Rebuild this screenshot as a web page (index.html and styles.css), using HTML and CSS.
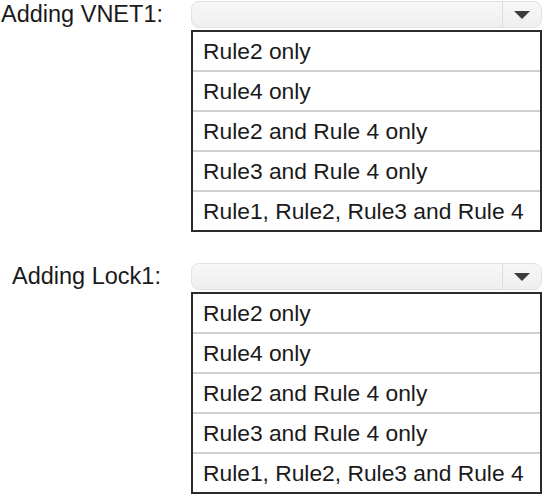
FILE: index.html
```html
<!DOCTYPE html>
<html>
<head>
<meta charset="utf-8">
<link rel="stylesheet" href="styles.css">
</head>
<body>
<div class="page">
  <section class="group first">
    <div class="label">Adding VNET1:</div>
    <div class="control">
      <div class="select">
        <div class="select-field"></div>
        <div class="select-btn"><span class="arrow"></span></div>
      </div>
      <ul class="options">
        <li>Rule2 only</li>
        <li>Rule4 only</li>
        <li>Rule2 and Rule 4 only</li>
        <li>Rule3 and Rule 4 only</li>
        <li>Rule1, Rule2, Rule3 and Rule 4</li>
      </ul>
    </div>
  </section>
  <section class="group second">
    <div class="label indent">Adding Lock1:</div>
    <div class="control">
      <div class="select">
        <div class="select-field"></div>
        <div class="select-btn"><span class="arrow"></span></div>
      </div>
      <ul class="options">
        <li>Rule2 only</li>
        <li>Rule4 only</li>
        <li>Rule2 and Rule 4 only</li>
        <li>Rule3 and Rule 4 only</li>
        <li>Rule1, Rule2, Rule3 and Rule 4</li>
      </ul>
    </div>
  </section>
</div>
</body>
</html>
```
FILE: styles.css
```css
html, body {
  margin: 0;
  padding: 0;
  background: #ffffff;
}
.page {
  font-family: "Liberation Sans", Arial, sans-serif;
  color: #1a1a1a;
  display: flex;
  flex-direction: column;
  gap: 31px;
  padding-top: 1px;
}
.group {
  display: grid;
  grid-template-columns: 191px 351px;
}
.label {
  font-size: 23.5px;
  height: 27px;
  line-height: 27px;
  padding-left: 1px;
}
.label.indent {
  padding-left: 12px;
}
.control {
  display: flex;
  flex-direction: column;
  gap: 2px;
}
.select {
  height: 25px;
  display: flex;
  border: 1px solid #e2e2e2;
  border-radius: 8px;
  background: linear-gradient(#f7f7f7, #efefef);
  overflow: hidden;
}
.select-field {
  flex: 1;
}
.select-btn {
  width: 38px;
  border-left: 1px solid #dcdcdc;
  display: flex;
  align-items: center;
  justify-content: center;
}
.arrow {
  width: 0;
  height: 0;
  border-left: 8px solid transparent;
  border-right: 8px solid transparent;
  border-top: 8px solid #3c3c3c;
}
.options {
  list-style: none;
  margin: 0;
  padding: 0;
  border: 2px solid #2b2b2b;
  background: #fff;
}
.options li {
  height: 38px;
  line-height: 38px;
  padding-left: 10px;
  font-size: 22.8px;
  border-top: 2px solid #cfcfcf;
}
.options li:first-child {
  border-top: 0;
}
```
